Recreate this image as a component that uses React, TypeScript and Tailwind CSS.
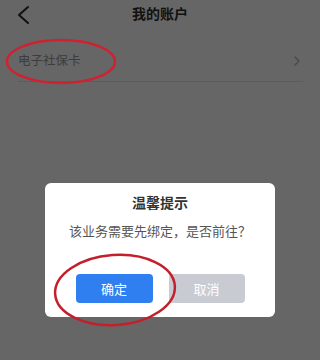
export default function App() {
    return (
        <div
            className="relative w-[320px] h-[360px] bg-[#666666] overflow-hidden"
            style={{ fontFamily: '"Noto Sans CJK SC", "Noto Sans", sans-serif' }}
        >
            {/* Header */}
            <div className="relative h-[28px] flex items-center justify-center">
                <svg className="absolute left-[16px] top-[5px]" width="16" height="20" viewBox="0 0 16 20" fill="none">
                    <path d="M12 2L3 10l9 8" stroke="#111" strokeWidth="2" strokeLinecap="round" strokeLinejoin="round" />
                </svg>
                <h1 className="text-[14px] font-bold text-[#111] leading-none -mt-[2px]">我的账户</h1>
            </div>

            {/* Row */}
            <div className="mt-[12px] ml-[18px] mr-[17px] h-[42px] flex items-center justify-between border-b border-[#5c5c5c] pr-[3px]">
                <span className="text-[12.5px] text-[#3d3d3d]">电子社保卡</span>
                <svg width="6" height="10" viewBox="0 0 6 10" fill="none">
                    <path d="M1 1l4 4-4 4" stroke="#4a4a4a" strokeWidth="1.4" strokeLinecap="round" strokeLinejoin="round" />
                </svg>
            </div>

            {/* Dialog */}
            <div className="mt-[101px] mx-auto w-[230px] h-[134px] bg-white rounded-[6px] pt-[11px] flex flex-col items-center">
                <div className="text-[14px] font-bold text-[#333] leading-[16px]">温馨提示</div>
                <div className="mt-[12px] text-[13px] text-[#555] leading-[18px]">该业务需要先绑定，是否前往？</div>
                <div className="mt-[34px] flex justify-center gap-4">
                    <button className="w-[77px] h-[29px] rounded-[4px] bg-[#2f7ff0] text-white text-[13px]">确定</button>
                    <button className="w-[76px] h-[29px] rounded-[4px] bg-[#c9cbd3] text-white text-[13px]">取消</button>
                </div>
            </div>

            {/* Annotation circles */}
            <svg className="absolute inset-0 pointer-events-none" width="320" height="360" viewBox="0 0 320 360" fill="none">
                <ellipse cx="61" cy="61.5" rx="54" ry="21.5" stroke="#cf2230" strokeWidth="2.5" />
                <ellipse cx="115" cy="290" rx="60" ry="35" stroke="#c41f2b" strokeWidth="2.5" transform="rotate(-4 115 290)" />
            </svg>
        </div>
    )
}
